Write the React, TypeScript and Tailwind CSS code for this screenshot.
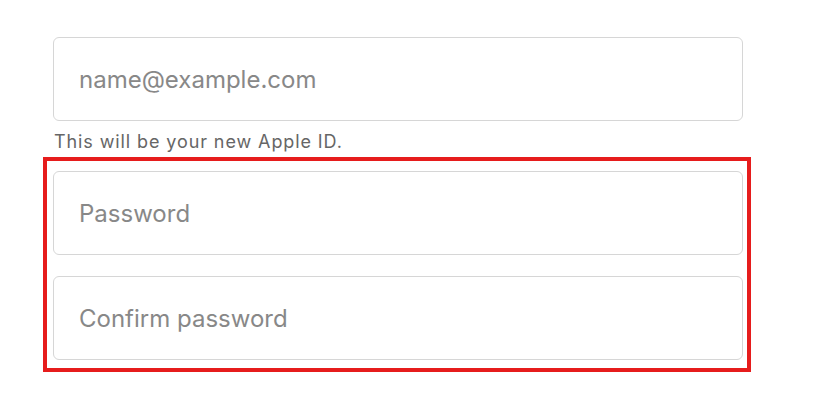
import React from "react";

const font = { fontFamily: "Inter, 'Noto Sans', sans-serif" };

function Field({ placeholder, type = "text" }: { placeholder: string; type?: string }) {
  return (
    <input
      type={type}
      placeholder={placeholder}
      className="block h-[84px] w-[690px] rounded-[6px] border border-[#d6d6d6] bg-white pl-[25px] text-[24px] text-[#333] outline-none placeholder:text-[#888]"
      style={font}
    />
  );
}

export default function App() {
  return (
    <div className="relative h-[410px] w-[818px] bg-white" style={font}>
      <div className="pl-[53px] pt-[37px]">
        <Field placeholder="name@example.com" type="email" />
        <p className="ml-[1px] mt-[9px] text-[18px] leading-[24px] tracking-[0.9px] text-[#666]">
          This will be your new Apple ID.
        </p>
        <div className="mt-[17px] flex flex-col gap-[21px]">
          <Field placeholder="Password" type="password" />
          <Field placeholder="Confirm password" type="password" />
        </div>
      </div>
      <div className="pointer-events-none absolute left-[43px] top-[157px] h-[215px] w-[708px] border-4 border-[#e61c1c]" />
    </div>
  );
}
